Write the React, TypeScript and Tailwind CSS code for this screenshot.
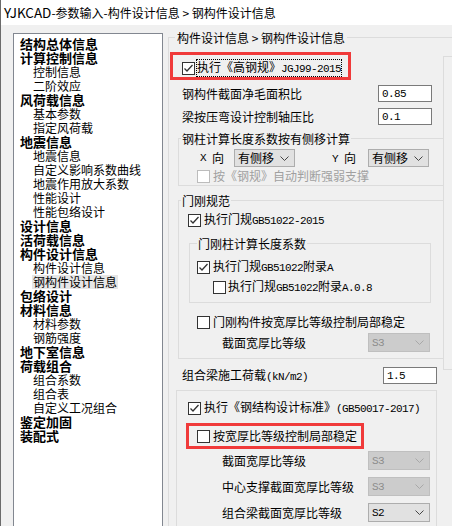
const tree: [string, number][] = [
  ["结构总体信息", 0],
  ["计算控制信息", 0],
  ["控制信息", 1],
  ["二阶效应", 1],
  ["风荷载信息", 0],
  ["基本参数", 1],
  ["指定风荷载", 1],
  ["地震信息", 0],
  ["地震信息", 1],
  ["自定义影响系数曲线", 1],
  ["地震作用放大系数", 1],
  ["性能设计", 1],
  ["性能包络设计", 1],
  ["设计信息", 0],
  ["活荷载信息", 0],
  ["构件设计信息", 0],
  ["构件设计信息", 1],
  ["钢构件设计信息", 1],
  ["包络设计", 0],
  ["材料信息", 0],
  ["材料参数", 1],
  ["钢筋强度", 1],
  ["地下室信息", 0],
  ["荷载组合", 0],
  ["组合系数", 1],
  ["组合表", 1],
  ["自定义工况组合", 1],
  ["鉴定加固", 0],
  ["装配式", 0],
];

const SELECTED = 17;

// ascii parts are drawn in a narrow mono face, like the half-width SimSun glyphs
const A = ({ children }: { children: React.ReactNode }) => (
  <span className="font-['Liberation_Mono',monospace] text-[11px] tracking-[-0.6px]">{children}</span>
);

function Check({ checked, disabled }: { checked?: boolean; disabled?: boolean }) {
  return (
    <span
      className={`flex h-[13px] w-[13px] shrink-0 items-center justify-center border bg-white ${
        disabled ? "border-[#bcbcbc]" : "border-[#333333]"
      }`}
    >
      {checked && (
        <svg width="11" height="11" viewBox="0 0 11 11">
          <polyline points="1.5,5.5 4,8 9.5,2" fill="none" stroke="#333333" strokeWidth="1.3" />
        </svg>
      )}
    </span>
  );
}

function Combo({ value, disabled, mono, className }: { value: string; disabled?: boolean; mono?: boolean; className: string }) {
  return (
    <div
      className={`flex shrink-0 items-center justify-between border pl-[3px] pr-[5px] ${
        disabled ? "border-[#bfbfbf] bg-[#cccccc] text-[#8d8d8d]" : "border-[#adadad] bg-[#e1e1e1] text-black"
      } ${className}`}
    >
      {mono ? <A>{value}</A> : <span className="text-[12px]">{value}</span>}
      <svg width="9" height="5" viewBox="0 0 9 5">
        <polyline points="0.5,0.5 4.5,4.5 8.5,0.5" fill="none" stroke={disabled ? "#a8a8a8" : "#444444"} strokeWidth="1" />
      </svg>
    </div>
  );
}

function Input({ value }: { value: string }) {
  return (
    <div className="flex h-[17px] w-[54px] shrink-0 items-center border border-[#7a7a7a] bg-white pl-[3px]">
      <A>{value}</A>
    </div>
  );
}

export default function App() {
  return (
    <div className="h-[526px] w-[452px] overflow-hidden border-l border-[#6b6b6b] bg-[#f0f0f0] font-['Noto_Sans_CJK_SC',sans-serif] text-black">
      {/* Title */}
      <div className="flex h-[25px] items-center bg-white pl-[3px] text-[12px]">
        <span className="text-[13.5px]">YJKCAD</span>-参数输入-构件设计信息 &gt; 钢构件设计信息
      </div>

      <div className="flex items-start pl-[12px] pt-[4px]">
        {/* Tree */}
        <div className="mt-[4px] h-[520px] w-[150px] shrink-0 border border-[#828790] bg-white pt-[3px]">
          {tree.map(([label, level], i) => (
            <div
              key={i}
              className={`flex h-[14px] items-center leading-[14px] ${
                level === 0 ? "pl-[6px] text-[13px] font-bold" : "pl-[19px] text-[12px]"
              }`}
            >
              {i === SELECTED ? <span className="-ml-[1px] bg-[#e6e6e6] px-[1px]">{label}</span> : label}
            </div>
          ))}
        </div>

        {/* Settings */}
        <fieldset className="ml-[5px] w-[300px] shrink-0 border border-[#dcdcdc]">
          <legend className="ml-[6px] px-[2px] text-[12px] leading-[17px]">构件设计信息 &gt; 钢构件设计信息</legend>
          <div className="flex text-[12px] leading-[14px]">
            <div className="w-[274px] shrink-0">
              <div className="ml-[1px] mt-[6px] flex h-[28px] w-[181px] items-center gap-[2px] border-[3px] border-[#f03a3a] pl-[9px] pt-[4px]">
                <Check checked />
                <span className="outline-1 outline-dotted outline-black">
                  执行《高钢规》<A>JGJ99-2015</A>
                </span>
              </div>

              <div className="mt-[5px] flex h-[17px] items-center pl-[13px]">
                <span className="w-[196px] shrink-0">钢构件截面净毛面积比</span>
                <Input value="0.85" />
              </div>
              <div className="mt-[6px] flex h-[17px] items-center pl-[13px]">
                <span className="w-[196px] shrink-0">梁按压弯设计控制轴压比</span>
                <Input value="0.1" />
              </div>

              <fieldset className="ml-[9px] mt-[5px] w-[265px] border border-r-0 border-[#dcdcdc] pb-[2px]">
                <legend className="ml-[2px] px-[1px] leading-[17px]">钢柱计算长度系数按有侧移计算</legend>
                <div className="mt-[2px] flex h-[18px] items-center pl-[21px]">
                  <A>X</A>
                  <span className="ml-[6px]">向</span>
                  <Combo value="有侧移" className="ml-[10px] h-[18px] w-[61px]" />
                  <span className="ml-[37px]">
                    <A>Y</A>
                  </span>
                  <span className="ml-[6px]">向</span>
                  <Combo value="有侧移" className="ml-[12px] h-[18px] w-[61px]" />
                </div>
                <div className="mt-[2px] flex h-[14px] items-center gap-[3px] pl-[18px] text-[#a0a0a0]">
                  <Check disabled />
                  <span>按《钢规》自动判断强弱支撑</span>
                </div>
              </fieldset>

              <fieldset className="ml-[9px] mt-[6px] w-[265px] border border-r-0 border-[#dcdcdc] pb-[6px]">
                <legend className="ml-[2px] px-[1px] leading-[17px]">门刚规范</legend>
                <div className="mt-[4px] flex h-[14px] items-center gap-[3px] pl-[9px]">
                  <Check checked />
                  <span>
                    执行门规<A>GB51022-2015</A>
                  </span>
                </div>

                <fieldset className="ml-[10px] mt-[8px] w-[242px] border border-[#dcdcdc] pb-[8px]">
                  <legend className="ml-[7px] px-[1px] leading-[17px]">门刚柱计算长度系数</legend>
                  <div className="mt-[8px] flex h-[14px] items-center gap-[3px] pl-[7px]">
                    <Check checked />
                    <span>
                      执行门规<A>GB51022</A>附录<A>A</A>
                    </span>
                  </div>
                  <div className="mt-[6px] flex h-[14px] items-center gap-[2px] pl-[23px]">
                    <Check />
                    <span>
                      执行门规<A>GB51022</A>附录<A>A.0.8</A>
                    </span>
                  </div>
                </fieldset>

                <div className="mt-[12px] flex h-[14px] items-center gap-[3px] pl-[18px]">
                  <Check />
                  <span>门刚构件按宽厚比等级控制局部稳定</span>
                </div>
                <div className="mt-[4px] flex h-[19px] items-center pl-[43px]">
                  <span className="w-[146px] shrink-0">截面宽厚比等级</span>
                  <Combo value="S3" mono disabled className="h-[19px] w-[62px]" />
                </div>
              </fieldset>

              <div className="mt-[8px] flex h-[17px] items-center pl-[13px]">
                <span className="w-[201px] shrink-0">
                  组合梁施工荷载<A>(kN/m2)</A>
                </span>
                <Input value="1.5" />
              </div>

              <div className="ml-[7px] mt-[6px] h-[200px] w-[261px] border border-[#dcdcdc]">
                <div className="mt-[10px] flex h-[14px] items-center gap-[3px] pl-[11px]">
                  <Check checked />
                  <span className="whitespace-nowrap">
                    执行《钢结构设计标准》<A>(GB50017-2017)</A>
                  </span>
                </div>
                <div className="ml-[9px] mt-[8px] flex h-[26px] w-[178px] items-center gap-[3px] border-[3px] border-[#f03a3a] pl-[8px]">
                  <Check />
                  <span>按宽厚比等级控制局部稳定</span>
                </div>
                <div className="mt-[2px] flex h-[19px] items-center pl-[45px]">
                  <span className="w-[146px] shrink-0">截面宽厚比等级</span>
                  <Combo value="S3" mono disabled className="h-[19px] w-[62px]" />
                </div>
                <div className="mt-[7px] flex h-[19px] items-center pl-[45px]">
                  <span className="w-[146px] shrink-0">中心支撑截面宽厚比等级</span>
                  <Combo value="S3" mono disabled className="h-[19px] w-[62px]" />
                </div>
                <div className="mt-[7px] flex h-[19px] items-center pl-[45px]">
                  <span className="w-[146px] shrink-0">组合梁截面宽厚比等级</span>
                  <Combo value="S2" mono className="h-[19px] w-[62px]" />
                </div>
              </div>
            </div>

            {/* neighbouring panel, cut off at the window edge */}
            <div className="mt-[10px] h-[314px] flex-1 border-b border-l border-t border-[#dcdcdc]" />
          </div>
        </fieldset>
      </div>
    </div>
  );
}
